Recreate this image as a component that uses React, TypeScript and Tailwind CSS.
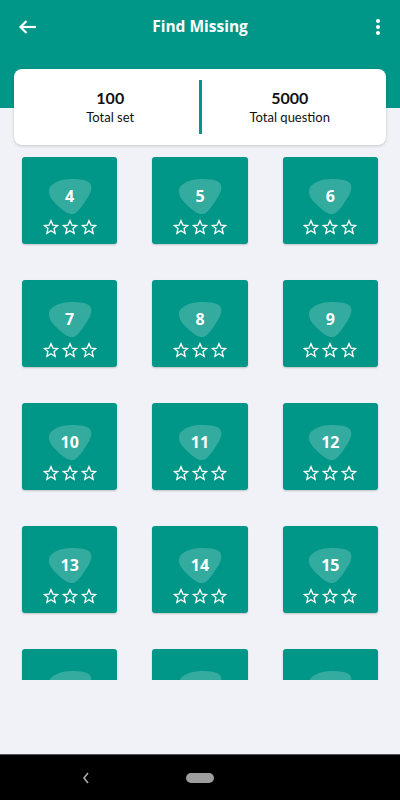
import React from "react";

const sets = [4, 5, 6, 7, 8, 9, 10, 11, 12, 13, 14, 15, 16, 17, 18];

function Star() {
  return (
    <svg width="16" height="16" viewBox="0 0 24 24" fill="none" stroke="white" strokeWidth="2" strokeLinejoin="miter">
      <path d="M12 2.5l2.9 6.6 7.1.6-5.4 4.7 1.6 7-6.2-3.7-6.2 3.7 1.6-7L2 9.7l7.1-.6z" />
    </svg>
  );
}

function SetTile({ n }: { n: number }) {
  return (
    <div className="h-[87px] bg-[#009688] rounded-[3px] shadow-[0_1px_2px_rgba(0,0,0,0.2)] flex flex-col items-center pt-[21px]">
      <div className="relative w-[46px] h-[38px] flex items-center justify-center">
        <svg className="absolute inset-0" width="46" height="38" viewBox="0 0 48 40">
          <path
            d="M25 1 C35 1 44 2 46 7 C48 12 44 19 39 26 C35 32 31 38 26 38 C21 38 15 33 9 27 C4 22 1 17 2 12 C3 6 14 1 25 1 Z"
            fill="rgba(255,255,255,0.2)"
          />
        </svg>
        <span className="relative text-white font-bold text-[16px] leading-none -mt-[3px]">{n}</span>
      </div>
      <div className="flex gap-[3px] mt-[3px]">
        <Star />
        <Star />
        <Star />
      </div>
    </div>
  );
}

export default function App() {
  return (
    <div className="w-[400px] h-[800px] bg-[#f1f2f7] flex flex-col overflow-hidden" style={{ fontFamily: '"Open Sans", "Noto Sans", sans-serif' }}>
      <div className="h-[108px] bg-[#009688] shrink-0">
        <div className="h-[54px] flex items-center justify-between px-[18px]">
          <div className="w-[24px] flex items-center">
            <svg width="19" height="16" viewBox="0 0 19 16" fill="none" stroke="white" strokeWidth="2.2">
              <path d="M18 8H2.5" />
              <path d="M8.5 2L2.5 8l6 6" />
            </svg>
          </div>
          <span className="text-white font-bold text-[15.5px]">Find Missing</span>
          <div className="w-[24px] flex items-center justify-end pr-[1px]">
            <svg width="6" height="18" viewBox="0 0 6 18" fill="white">
              <circle cx="3" cy="3" r="2" />
              <circle cx="3" cy="9" r="2" />
              <circle cx="3" cy="15" r="2" />
            </svg>
          </div>
        </div>
      </div>

      <div
        className="mx-[14px] -mt-[39px] h-[76px] px-[8px] bg-white rounded-[8px] shadow-[0_1px_3px_rgba(0,0,0,0.18)] flex items-center shrink-0 relative"
        style={{ fontFamily: 'Lato, "Open Sans", sans-serif' }}
      >
        <div className="flex-1 flex flex-col items-center text-[#111]">
          <span className="font-bold text-[16px] leading-[20px]">100</span>
          <span className="text-[13px] leading-[18px]">Total set</span>
        </div>
        <div className="w-[3px] h-[54px] bg-[#009688]" />
        <div className="flex-1 flex flex-col items-center text-[#111]">
          <span className="font-bold text-[16px] leading-[20px]">5000</span>
          <span className="text-[13px] leading-[18px]">Total question</span>
        </div>
      </div>

      <div className="h-[535px] overflow-hidden px-[22px] pt-[12px] shrink-0">
        <div className="grid grid-cols-3 gap-x-[35px] gap-y-[36px]">
          {sets.map((n) => (
            <SetTile key={n} n={n} />
          ))}
        </div>
      </div>

      <div className="flex-1" />

      <div className="h-[46px] bg-black border-t border-[#555] flex items-center shrink-0 relative">
        <svg className="ml-[81px]" width="10" height="14" viewBox="0 0 10 14" fill="none" stroke="#aaa" strokeWidth="1.6">
          <path d="M7 2L3 7l4 5" />
        </svg>
        <div className="ml-[95px] w-[28px] h-[10px] rounded-full bg-[#9e9e9e]" />
      </div>
    </div>
  );
}
